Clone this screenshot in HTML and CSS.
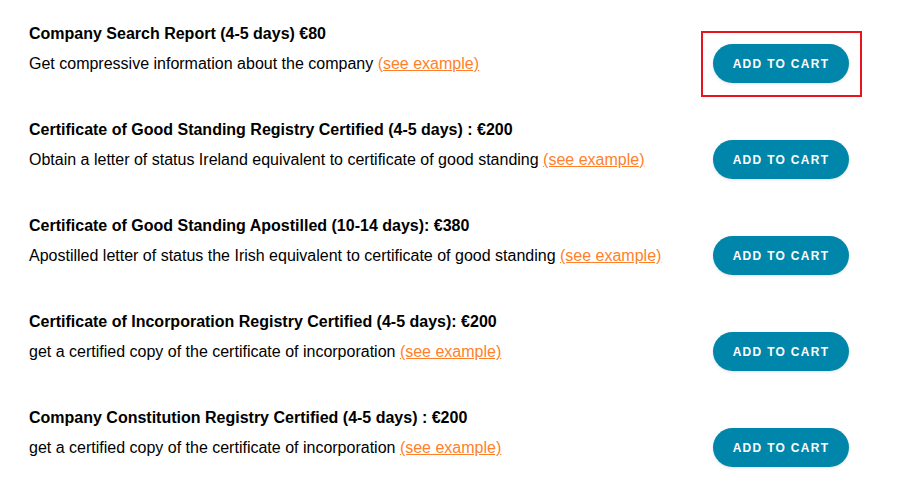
FILE: index.html
```html
<!DOCTYPE html>
<html>
<head>
<meta charset="utf-8">
<link rel="stylesheet" href="styles.css">
</head>
<body>
<div class="list">
  <div class="item">
    <div class="info">
      <div class="title">Company Search Report (4-5 days) €80</div>
      <div class="desc">Get compressive information about the company <a href="#">(see example)</a></div>
    </div>
    <div class="action highlighted"><button class="btn">ADD TO CART</button></div>
  </div>
  <div class="item">
    <div class="info">
      <div class="title">Certificate of Good Standing Registry Certified (4-5 days) : €200</div>
      <div class="desc">Obtain a letter of status Ireland equivalent to certificate of good standing <a href="#">(see example)</a></div>
    </div>
    <div class="action"><button class="btn">ADD TO CART</button></div>
  </div>
  <div class="item">
    <div class="info">
      <div class="title">Certificate of Good Standing Apostilled (10-14 days): €380</div>
      <div class="desc">Apostilled letter of status the Irish equivalent to certificate of good standing <a href="#">(see example)</a></div>
    </div>
    <div class="action"><button class="btn">ADD TO CART</button></div>
  </div>
  <div class="item">
    <div class="info">
      <div class="title">Certificate of Incorporation Registry Certified (4-5 days): €200</div>
      <div class="desc">get a certified copy of the certificate of incorporation <a href="#">(see example)</a></div>
    </div>
    <div class="action"><button class="btn">ADD TO CART</button></div>
  </div>
  <div class="item">
    <div class="info">
      <div class="title">Company Constitution Registry Certified (4-5 days) : €200</div>
      <div class="desc">get a certified copy of the certificate of incorporation <a href="#">(see example)</a></div>
    </div>
    <div class="action"><button class="btn">ADD TO CART</button></div>
  </div>
</div>
</body>
</html>
```
FILE: styles.css
```css
html, body {
  margin: 0;
  padding: 0;
  background: #ffffff;
}
body {
  font-family: "Liberation Sans", Arial, Helvetica, sans-serif;
  color: #000000;
}
.list {
  display: flex;
  flex-direction: column;
  padding: 22px 35px 0 29px;
}
.item {
  display: flex;
  align-items: flex-start;
  justify-content: space-between;
  height: 96px;
}
.info {
  display: flex;
  flex-direction: column;
  gap: 11px;
  padding-top: 2px;
}
.title {
  font-size: 16px;
  font-weight: bold;
  line-height: 19px;
}
.desc {
  font-size: 16px;
  line-height: 19px;
}
.desc a {
  color: #ff7f2a;
  text-decoration: underline;
}
.action {
  display: flex;
  padding: 11px 11px 12px 10px;
  border: 2px solid transparent;
  margin-top: 9px;
}
.action.highlighted {
  border-color: #e8141c;
}
.btn {
  width: 136px;
  height: 39px;
  border: none;
  border-radius: 20px;
  background: #0086aa;
  color: #ffffff;
  font-family: "Liberation Sans", Arial, Helvetica, sans-serif;
  font-weight: bold;
  font-size: 12px;
  letter-spacing: 1.3px;
  padding: 0;
  box-shadow: 0 1px 3px rgba(0,0,0,0.12);
  cursor: pointer;
}
```
